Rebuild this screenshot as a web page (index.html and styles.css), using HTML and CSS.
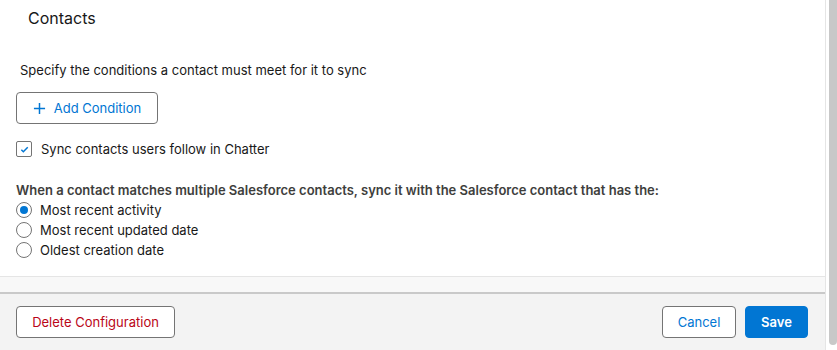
FILE: index.html
```html
<!DOCTYPE html>
<html>
<head>
    <title>Contacts</title>
    <link rel="stylesheet" href="styles.css">
</head>
<body>
    <div class="window">
        <div class="panel">
            <div class="content">
                <h2 class="title">Contacts</h2>

                <p class="hint">Specify the conditions a contact must meet for it to sync</p>

                <button class="btn btn-neutral add-btn">
                    <svg class="plus" viewBox="0 0 14 14" width="13" height="13">
                        <path d="M7 1v12M1 7h12" stroke="currentColor" stroke-width="1.6" fill="none"/>
                    </svg>
                    Add Condition
                </button>

                <label class="check">
                    <span class="box">
                        <svg viewBox="0 0 10 10" width="9" height="9">
                            <path d="M1.5 5.3l2.2 2.2L8.6 2.4" stroke="#0176d3" stroke-width="1.6" fill="none"/>
                        </svg>
                    </span>
                    Sync contacts users follow in Chatter
                </label>

                <p class="legend">When a contact matches multiple Salesforce contacts, sync it with the Salesforce contact that has the:</p>
                <div class="radios">
                    <label class="radio"><span class="dot checked"></span>Most recent activity</label>
                    <label class="radio"><span class="dot"></span>Most recent updated date</label>
                    <label class="radio"><span class="dot"></span>Oldest creation date</label>
                </div>
            </div>
            <div class="strip"></div>
            <div class="footer">
                <button class="btn btn-neutral delete-btn">Delete Configuration</button>
                <div class="actions">
                    <button class="btn btn-neutral cancel-btn">Cancel</button>
                    <button class="btn btn-brand">Save</button>
                </div>
            </div>
        </div>
        <div class="scrollbar"></div>
    </div>
</body>
</html>
```

FILE: styles.css
```css
/* Panel de configuracion de contactos */
body {
    margin: 0;
    background: #fff;
    font-family: Inter, "Liberation Sans", sans-serif;
    font-size: 13px;
    color: #181818;
}

.window {
    display: flex;
    height: 350px;
    overflow: hidden;
}

.panel {
    width: 825px;
    border-right: 1px solid #e5e5e5;
    display: flex;
    flex-direction: column;
}

.scrollbar {
    width: 8px;
    margin-left: 3px;
    height: 345px;
    background: #c8c8c8;
    border-radius: 0 0 4px 4px;
}

.content {
    height: 276px;
    padding: 0 16px;
    border-bottom: 1px solid #e5e5e5;
}

.title {
    margin: 0;
    padding: 8px 12px 0;
    font-size: 16px;
    font-weight: 400;
    line-height: 20px;
}

.hint {
    margin: 33px 0 0 4px;
    line-height: 18px;
}

.btn {
    font-family: inherit;
    font-size: 13px;
    height: 32px;
    border-radius: 4px;
    padding: 0;
    white-space: nowrap;
    display: flex;
    align-items: center;
    justify-content: center;
    cursor: pointer;
}

.btn-neutral {
    background: #fff;
    border: 1px solid #747474;
    color: #0176d3;
}

.btn-brand {
    background: #0176d3;
    border: 1px solid #0176d3;
    color: #fff;
    font-weight: 600;
    width: 63px;
}

.add-btn {
    margin-top: 13px;
    width: 142px;
    gap: 8px;
}

.check {
    display: flex;
    align-items: center;
    gap: 9px;
    margin-top: 16px;
    line-height: 18px;
}

.box {
    width: 14px;
    height: 14px;
    border: 1px solid #747474;
    border-radius: 2px;
    display: flex;
    align-items: center;
    justify-content: center;
}

.legend {
    margin: 23px 0 1px;
    font-weight: 600;
    color: #3e3e3c;
    line-height: 18px;
}

.radios {
    display: flex;
    flex-direction: column;
}

.radio {
    display: flex;
    align-items: center;
    gap: 8px;
    height: 20px;
}

.dot {
    width: 14px;
    height: 14px;
    border: 1px solid #747474;
    border-radius: 50%;
    position: relative;
}

.dot.checked::after {
    content: "";
    position: absolute;
    top: 3px;
    left: 3px;
    width: 8px;
    height: 8px;
    border-radius: 50%;
    background: #0176d3;
}

.strip {
    height: 15px;
    background: #f8f8f8;
    border-bottom: 2px solid #c9c9c9;
}

.footer {
    flex: 1;
    background: #f3f3f3;
    display: flex;
    justify-content: space-between;
    align-items: flex-start;
    padding: 12px 17px 0 16px;
}

.delete-btn {
    color: #ba0517;
    width: 159px;
}

.actions {
    display: flex;
    gap: 9px;
}

.cancel-btn {
    width: 74px;
}
```
